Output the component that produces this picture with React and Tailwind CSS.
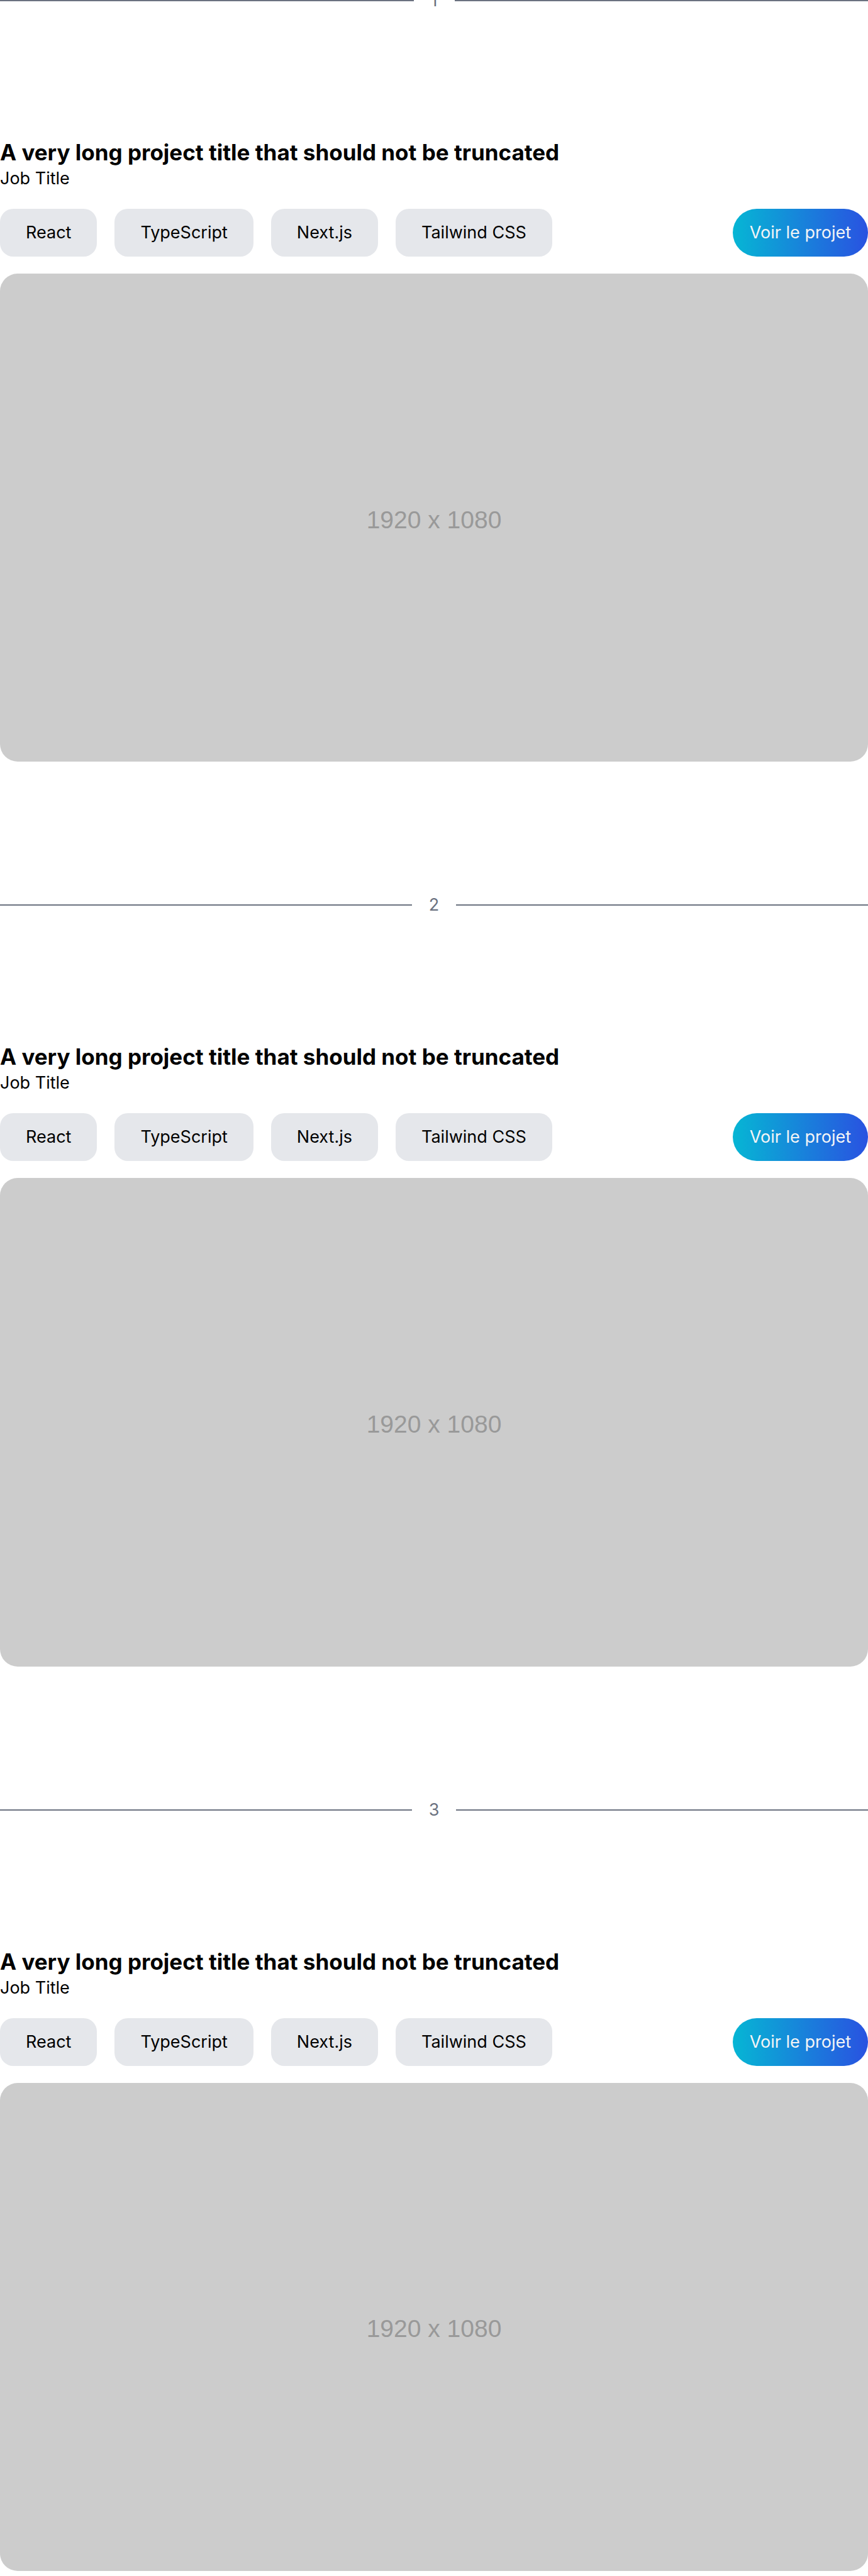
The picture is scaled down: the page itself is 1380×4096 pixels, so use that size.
const technologies = ["React", "TypeScript", "Next.js", "Tailwind CSS"];
const projects = [1, 2, 3];

function Divider({ label }) {
  return (
    <div className="flex h-[42px] items-center gap-[27px] text-[27px] leading-[42px] text-[#6b7280]">
      <span className="h-0.5 flex-1 bg-[#6b7280]" />
      <span>{label}</span>
      <span className="h-0.5 flex-1 bg-[#6b7280]" />
    </div>
  );
}

function Project() {
  return (
    <article className="pt-[197px]">
      <h2 className="text-[35px] leading-[46px] font-bold">
        A very long project title that should not be truncated
      </h2>
      <p className="text-[27px] leading-[38px]">Job Title</p>
      <div className="mt-[29px] flex items-center justify-between">
        <ul className="flex gap-[28px]">
          {technologies.map((name) => (
            <li
              key={name}
              className="rounded-[21px] bg-[#e5e7eb] px-[41px] py-[17px] text-[27px] leading-[42px]"
            >
              {name}
            </li>
          ))}
        </ul>
        <a
          href="#projet"
          className="rounded-full bg-linear-to-r/srgb from-[#06b6d4] to-[#2952e1] px-[27px] py-[17px] text-[27px] leading-[42px] text-[#f3f4f6]"
        >
          Voir le projet
        </a>
      </div>
      <div className="mt-[27px] flex aspect-video w-full items-center justify-center rounded-[28px] bg-[#cccccc] pt-2 font-['Liberation_Sans',sans-serif] text-[39px] text-[#999999]">
        1920 x 1080
      </div>
    </article>
  );
}

export default function App() {
  return (
    <main className="flex flex-col gap-[207px] overflow-hidden bg-white pb-2 font-[Inter,sans-serif] text-black">
      {projects.map((number) => (
        <section key={number} className="first:-mt-5">
          <Divider label={number} />
          <Project />
        </section>
      ))}
    </main>
  );
}
